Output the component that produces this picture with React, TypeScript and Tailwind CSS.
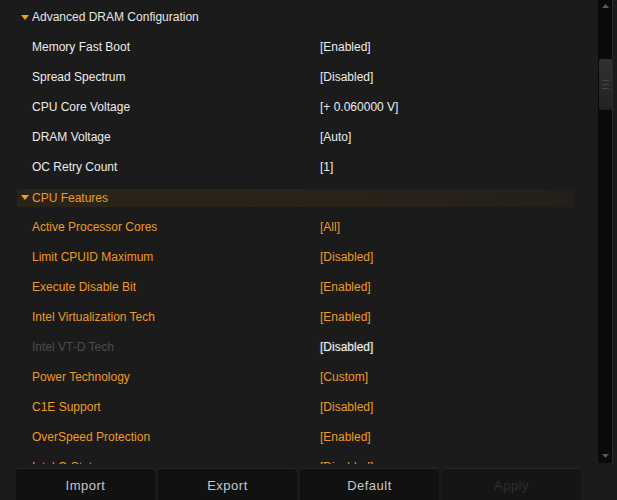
type Item = { label: string; value: string; tone: "white" | "orange" | "muted" };

const dram: Item[] = [
  { label: "Memory Fast Boot", value: "[Enabled]", tone: "white" },
  { label: "Spread Spectrum", value: "[Disabled]", tone: "white" },
  { label: "CPU Core Voltage", value: "[+ 0.060000 V]", tone: "white" },
  { label: "DRAM Voltage", value: "[Auto]", tone: "white" },
  { label: "OC Retry Count", value: "[1]", tone: "white" },
];

const cpu: Item[] = [
  { label: "Active Processor Cores", value: "[All]", tone: "orange" },
  { label: "Limit CPUID Maximum", value: "[Disabled]", tone: "orange" },
  { label: "Execute Disable Bit", value: "[Enabled]", tone: "orange" },
  { label: "Intel Virtualization Tech", value: "[Enabled]", tone: "orange" },
  { label: "Intel VT-D Tech", value: "[Disabled]", tone: "muted" },
  { label: "Power Technology", value: "[Custom]", tone: "orange" },
  { label: "C1E Support", value: "[Disabled]", tone: "orange" },
  { label: "OverSpeed Protection", value: "[Enabled]", tone: "orange" },
  { label: "Intel C-State", value: "[Disabled]", tone: "orange" },
];

const Caret = () => (
  <svg width="8" height="5" viewBox="0 0 8 5" className="mr-[3px]">
    <path d="M0 0H8L4 5Z" fill="#f0a020" />
  </svg>
);

const Row = ({ item }: { item: Item }) => {
  const labelCls =
    item.tone === "white" ? "text-[#ececec]" : item.tone === "orange" ? "text-[#eb9a25]" : "text-[#4c4c4c]";
  const valueCls =
    item.tone === "white"
      ? "text-[#ececec]"
      : item.tone === "orange"
        ? "text-[#eb9a25]"
        : "text-[#f0f0f0] [text-shadow:0_0_2px_#6a6a6a]";
  return (
    <div className="flex h-[30px] shrink-0 items-center pl-[32px]">
      <span className={`w-[288px] ${labelCls}`}>{item.label}</span>
      <span className={valueCls}>{item.value}</span>
    </div>
  );
};

export default function App() {
  return (
    <div
      className="flex h-[500px] w-[617px] flex-col overflow-hidden bg-[#1b1b1b] text-[12px]"
      style={{ fontFamily: '"Liberation Sans", Arial, sans-serif' }}
    >
      <div className="flex h-[464px] shrink-0">
        {/* settings list */}
        <div className="flex w-[598px] flex-col overflow-hidden pt-[2px]">
          <div className="flex h-[30px] shrink-0 items-center pl-[21px] text-[#e6e6e6]">
            <Caret />
            <span>Advanced DRAM Configuration</span>
          </div>
          {dram.map((it) => (
            <Row key={it.label} item={it} />
          ))}
          <div className="flex h-[30px] shrink-0 items-center pl-[17px] pt-[1px]">
            <div className="flex h-[18px] w-[557px] items-center bg-gradient-to-r from-[#2b2318] via-[#2a2319] to-[#231f1a] pl-[4px] text-[#eb9a25]">
              <Caret />
              <span>CPU Features</span>
            </div>
          </div>
          {cpu.map((it) => (
            <Row key={it.label} item={it} />
          ))}
        </div>

        {/* scrollbar */}
        <div className="flex h-[463px] w-[15px] flex-col items-center border-r border-[#2a2a2a] bg-[#0a0a0a]">
          <svg width="7" height="4" viewBox="0 0 7 4" className="mt-[4px]">
            <path d="M0 4H7L3.5 0Z" fill="#5a5a5a" />
          </svg>
          <div className="mt-[51px] flex h-[51px] w-[13px] flex-col items-center justify-center gap-[3px] rounded-[2px] bg-gradient-to-b from-[#303030] to-[#222]">
            <div className="h-px w-[7px] bg-[#444]" />
            <div className="h-px w-[7px] bg-[#444]" />
            <div className="h-px w-[7px] bg-[#444]" />
          </div>
          <div className="flex-1" />
          <svg width="7" height="4" viewBox="0 0 7 4" className="mb-[5px]">
            <path d="M0 0H7L3.5 4Z" fill="#5a5a5a" />
          </svg>
        </div>
      </div>

      {/* action buttons */}
      <div className="mt-[4px] flex h-[32px] shrink-0 gap-[3px] pl-[16px] text-[13px] tracking-[0.5px]">
        {["Import", "Export", "Default", "Apply"].map((b) => (
          <button
            key={b}
            className={`flex w-[139px] items-center justify-center rounded-t-[4px] border-t border-[#262626] bg-[#111] pt-[3px] ${
              b === "Apply" ? "bg-[#151515] text-[#2e2e2e]" : "text-[#c8c8c8]"
            }`}
          >
            {b}
          </button>
        ))}
      </div>
    </div>
  );
}
